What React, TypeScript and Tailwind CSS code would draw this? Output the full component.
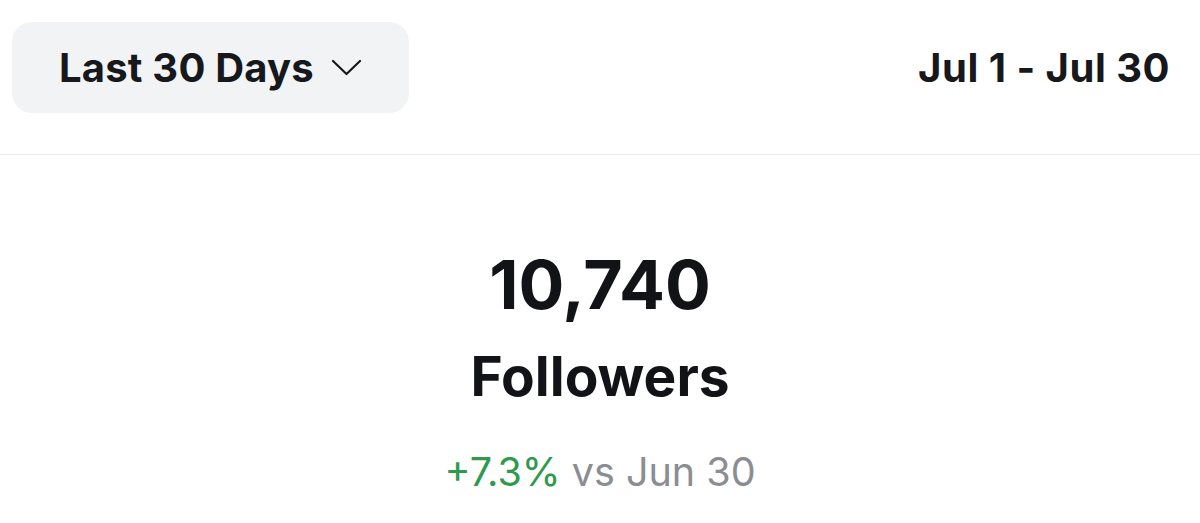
export default function App() {
  return (
    <div className="w-[1200px] h-[523px] bg-white overflow-hidden" style={{ fontFamily: "Inter, 'Liberation Sans', sans-serif" }}>
      <div className="flex items-center justify-between pl-3 pr-[30px] pt-[22px] pb-[41px] border-b border-[#ececee]">
        <button className="flex items-center h-[91px] w-[397px] pl-[47px] rounded-[20px] bg-[#f2f3f5] text-[#16181c]">
          <span className="text-[40px] font-bold tracking-[0.2px]">Last 30 Days</span>
          <svg className="ml-[17px]" width="31" height="17" viewBox="0 0 31 17" fill="none" stroke="#16181c" strokeWidth="2.2" strokeLinecap="round" strokeLinejoin="round">
            <polyline points="2 2 15.5 15 29 2" />
          </svg>
        </button>
        <div className="text-[40px] font-bold text-[#16181c] tracking-[0.5px]">Jul 1 - Jul 30</div>
      </div>
      <div className="flex flex-col items-center pt-[89px]">
        <div className="text-[68px] leading-[80px] font-bold text-[#111316]">10,740</div>
        <div className="text-[55px] leading-[66px] mt-[19px] font-bold text-[#111316]">Followers</div>
        <div className="text-[39.5px] leading-[48px] mt-[39px]">
          <span className="text-[#2f9a4e]">+7.3%</span>
          <span className="text-[#8a8d92]"> vs Jun 30</span>
        </div>
      </div>
    </div>
  );
}
